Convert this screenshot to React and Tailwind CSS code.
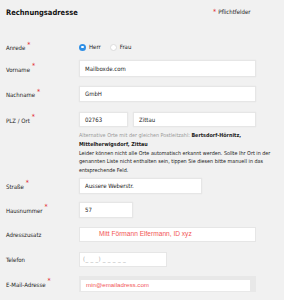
import React from "react";

const font = { fontFamily: '"DejaVu Sans Condensed", "Liberation Sans", sans-serif' };
const arial = { fontFamily: '"Liberation Sans", sans-serif' };

function Star() {
  return <span className="text-[#e2262c] text-[7px] leading-none relative top-[-3px] ml-[2px]">*</span>;
}

function Label({ children, req }) {
  return (
    <div className="w-[73px] shrink-0 text-[6px] leading-none text-[#222] flex items-center pt-[2px]">
      <span>{children}</span>
      {req && <Star />}
    </div>
  );
}

function Input({ w, h = "h-[16px]", value, gray }) {
  return (
    <div
      className={`${w} ${h} bg-white border border-[#e6e6e6] shadow-[0_0_1px_rgba(0,0,0,0.08)] flex items-center pl-[5px] text-[6px] leading-none ${gray ? "text-[#999]" : "text-[#222]"}`}
    >
      {value}
    </div>
  );
}

export default function App() {
  return (
    <div className="w-[284px] h-[300px] bg-[#f1f1f1] overflow-hidden" style={font}>
      <div className="pl-[6px] pt-[7px]">
        <div className="flex items-center h-[10px]">
          <div className="w-[207px] font-bold text-[7.5px] leading-none text-[#111] pt-[1px]">Rechnungsadresse</div>
          <div className="flex items-center text-[6px] leading-none text-[#222] pb-[1px]">
            <span className="text-[#e2262c] text-[7px] mr-[2px] relative top-[1px]">*</span>
            Pflichtfelder
          </div>
        </div>

        <div className="flex items-center mt-[25px] h-[10px]">
          <Label req>Anrede</Label>
          <div className="flex items-center text-[6px] leading-none text-[#222]">
            <span className="w-[7px] h-[7px] rounded-full bg-[#2f8fe6] flex items-center justify-center">
              <span className="w-[2.5px] h-[2.5px] rounded-full bg-white" />
            </span>
            <span className="ml-[3px]">Herr</span>
            <span className="ml-[9px] w-[7px] h-[7px] rounded-full bg-white border border-[#dcdcdc]" />
            <span className="ml-[3px]">Frau</span>
          </div>
        </div>

        <div className="flex items-center mt-[8px] h-[17px]">
          <Label req>Vorname</Label>
          <Input w="w-[177px]" h="h-[17px]" value="Mailboxde.com" />
        </div>

        <div className="flex items-center mt-[9px] h-[16px]">
          <Label req>Nachname</Label>
          <Input w="w-[177px]" value="GmbH" />
        </div>

        <div className="flex items-start mt-[10px]">
          <div className="h-[15px] flex items-center">
            <Label req>PLZ / Ort</Label>
          </div>
          <div className="w-[190px]">
            <div className="flex gap-[5px]">
              <Input w="w-[49px]" h="h-[15px]" value="02763" />
              <Input w="w-[123px]" h="h-[15px]" value="Zittau" />
            </div>
            <div className="mt-[4px] text-[5.4px] leading-[8.75px] text-[#222] whitespace-nowrap">
              <div>
                <span className="text-[#9a9a9a]">Alternative Orte mit der gleichen Postleitzahl: </span>
                <span className="font-bold">Bertsdorf-Hörnitz,</span>
              </div>
              <div className="font-bold">Mittelherwigsdorf, Zittau</div>
              <div>Leider können nicht alle Orte automatisch erkannt werden. Sollte Ihr Ort in der</div>
              <div>genannten Liste nicht enthalten sein, tippen Sie diesen bitte manuell in das</div>
              <div>entsprechende Feld.</div>
            </div>
          </div>
        </div>

        <div className="flex items-center mt-[3px] h-[16px]">
          <Label req>Straße</Label>
          <Input w="w-[123px]" value="Aussere Weberstr." />
        </div>

        <div className="flex items-center mt-[8px] h-[16px]">
          <Label req>Hausnummer</Label>
          <Input w="w-[54px]" value="57" />
        </div>

        <div className="flex items-center mt-[9px] h-[15px]">
          <Label>Adresszusatz</Label>
          <div className="w-[177px] h-[15px] bg-white border border-[#e6e6e6] flex items-center pl-[19px] text-[6.6px] leading-none text-[#f25555]" style={arial}>
            Mitt Förmann Elfermann, ID xyz
          </div>
        </div>

        <div className="flex items-center mt-[10px] h-[15px]">
          <Label>Telefon</Label>
          <div className="w-[88px] h-[15px] bg-white border border-[#e6e6e6] flex items-center pl-[3px] text-[6px] leading-none text-[#aaa] tracking-[0.3px]">
            (_ _ _) _ _ _ _ _
          </div>
        </div>

        <div className="flex items-center mt-[9px] h-[16px]">
          <Label req>E-Mail-Adresse</Label>
          <div className="w-[177px] h-[16px] bg-[#e8e8e8] pt-[4px] pl-[2px] pr-[6px] pb-[1px]">
            <div className="h-full bg-white flex items-center pl-[5px] text-[6.2px] leading-none text-[#f25555]" style={arial}>
              min@emailadress.com
            </div>
          </div>
        </div>
      </div>
    </div>
  );
}
